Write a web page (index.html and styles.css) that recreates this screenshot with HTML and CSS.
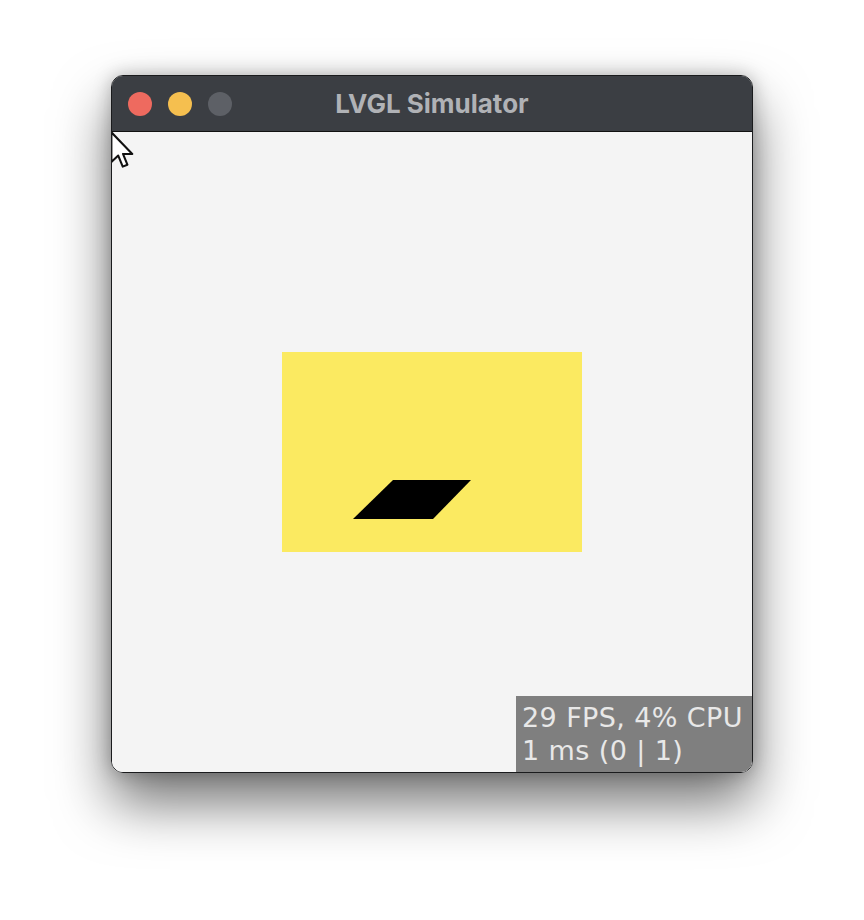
FILE: index.html
```html
<!DOCTYPE html>
<html lang="en">

<head>
    <meta charset="UTF-8">
    <meta name="viewport" content="width=device-width, initial-scale=1.0">
    <title>LVGL Simulator</title>
    <link rel="stylesheet" href="styles.css">
</head>

<body>
    <div class="window">
        <div class="title-bar">
            <div class="lights">
                <span class="light light-close"></span>
                <span class="light light-min"></span>
                <span class="light light-max"></span>
            </div>
            <div class="title">LVGL Simulator</div>
        </div>

        <div class="screen">
            <div class="panel">
                <svg class="shape" width="300" height="200" viewBox="0 0 300 200">
                    <polygon points="111,128 189,128 151,167 71,167" fill="#000" />
                </svg>
            </div>

            <div class="perf-monitor">
                <div>29 FPS, 4% CPU</div>
                <div>1 ms (0 | 1)</div>
            </div>

            <svg class="cursor" width="26" height="40" viewBox="0 0 20 31">
                <path d="M1 1 L1 24 L6.3 19 L9.8 27.6 L13.4 26.1 L10 17.8 L17.2 17.8 Z" fill="#fff" stroke="#111" stroke-width="1.6" stroke-linejoin="round" />
            </svg>
        </div>
    </div>
</body>

</html>
```

FILE: styles.css
```css
html {
    background: #fff;
}

body {
    margin: 0;
    padding: 75px 0 0 111px;
    min-height: 920px;
    box-sizing: border-box;
    font-family: Inter, "Liberation Sans", sans-serif;
}

.window {
    width: 640px;
    border: 1px solid #1a1b1d;
    border-radius: 12px;
    overflow: hidden;
    box-shadow: 0 30px 55px rgba(0, 0, 0, 0.55), 0 0 18px rgba(0, 0, 0, 0.25);
}

.title-bar {
    position: relative;
    height: 55px;
    background: #3b3e43;
    border-bottom: 1px solid #111;
    display: flex;
    align-items: center;
    justify-content: center;
}

.lights {
    position: absolute;
    left: 16px;
    top: 16px;
    display: flex;
    gap: 16px;
}

.light {
    width: 24px;
    height: 24px;
    border-radius: 50%;
}

.light-close {
    background: #ee6a5f;
}

.light-min {
    background: #f5bf4f;
}

.light-max {
    background: #5d6066;
}

.title {
    color: #b0b2b6;
    font-size: 26px;
    font-weight: bold;
    margin-top: -1px;
}

.screen {
    position: relative;
    height: 640px;
    background: #f4f4f4;
    display: flex;
    align-items: center;
    justify-content: center;
}

.panel {
    width: 300px;
    height: 200px;
    background: #fbea61;
}

.shape {
    display: block;
}

.perf-monitor {
    position: absolute;
    right: 0;
    bottom: 0;
    width: 236px;
    height: 76px;
    padding: 5px 0 0 6px;
    box-sizing: border-box;
    background: #7f7f7f;
    color: #e8e8e8;
    font-family: "DejaVu Sans", sans-serif;
    font-size: 27px;
    letter-spacing: 0.4px;
    line-height: 33px;
    white-space: nowrap;
}

.cursor {
    position: absolute;
    left: -2px;
    top: -1px;
}
```
